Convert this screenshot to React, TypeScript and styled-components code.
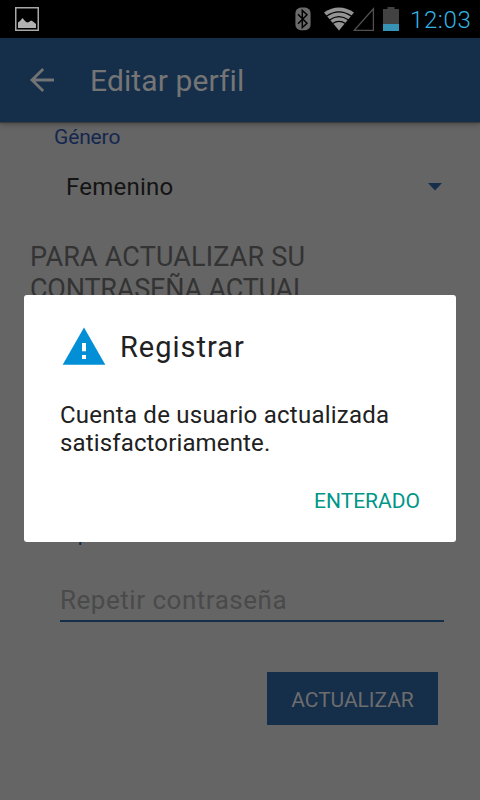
import React from 'react';
import styled, { createGlobalStyle } from 'styled-components';

const GlobalStyle = createGlobalStyle`
  * { box-sizing: border-box; }
  html, body { margin: 0; background: #656565; }
  body { font-family: Roboto, "Liberation Sans", sans-serif; }
  button, input { font-family: inherit; border: 0; margin: 0; border-radius: 0; }
`;

const Screen = styled.div`
  display: flex;
  flex-direction: column;
  position: relative;
  width: 480px;
  height: 800px;
  overflow: hidden;
  background: #656565;
`;

const StatusBar = styled.div`
  display: flex;
  justify-content: space-between;
  align-items: center;
  flex: none;
  height: 38px;
  padding: 0 6px 0 15px;
  background: #000;
`;

const StatusIcons = styled.div`
  display: flex;
  align-items: center;
`;

const Clock = styled.span`
  width: 64px;
  padding-top: 2px;
  font-size: 24px;
  font-weight: 300;
  line-height: 36px;
  letter-spacing: 0.6px;
  white-space: nowrap;
  color: #33b5e5;
`;

const Header = styled.header`
  display: flex;
  align-items: center;
  flex: none;
  height: 84px;
  padding: 0 30px;
  background: #152e4a;
  box-shadow: 0 1px 1px #3c3c3c, 0 2px 6px rgba(0, 0, 0, 0.3);
`;

const HeaderTitle = styled.h1`
  margin: 2px 0 0 35px;
  font-size: 30px;
  font-weight: 400;
  line-height: 36px;
  letter-spacing: 0.12px;
  color: #757575;
`;

const Form = styled.main`
  display: flex;
  flex-direction: column;
  flex: 1;
  padding: 3px 30px 0;
`;

const FieldLabel = styled.label`
  padding-left: 24px;
  font-size: 21px;
  line-height: 24px;
  letter-spacing: -0.14px;
  color: #14274f;
`;

const Select = styled.div`
  display: flex;
  align-items: center;
  justify-content: space-between;
  height: 28px;
  margin: 24px 0 40px;
  padding: 0 7px 0 36px;
  font-size: 24px;
  line-height: 28px;
  letter-spacing: 0.23px;
  color: #141414;
`;

const SectionTitle = styled.h2`
  height: 64px;
  margin: 0 0 217px;
  font-size: 27px;
  font-weight: 400;
  line-height: 32px;
  color: #333;
`;

const TitleLine = styled.span<{ $tracking: number }>`
  display: block;
  letter-spacing: ${({ $tracking }) => $tracking}px;
`;

const PasswordInput = styled.input`
  width: 384px;
  height: 38px;
  margin: 38px 0 50px 30px;
  padding: 0 0 5px;
  border-bottom: 2px solid #152e4a;
  outline: 0;
  background: transparent;
  font-size: 26px;
  line-height: 30px;
  letter-spacing: 0.52px;
  &::placeholder { color: #4a4a4a; opacity: 1; }
`;

const SubmitButton = styled.button`
  align-self: flex-end;
  width: 171px;
  height: 53px;
  margin-right: 12px;
  padding: 2px 0 0;
  background: #152e4a;
  font-size: 21px;
  line-height: 24px;
  letter-spacing: -0.06px;
  color: #6d6d6d;
`;

const DialogLayer = styled.div`
  position: absolute;
  inset: 37px 0 0;
  display: flex;
  align-items: center;
  justify-content: center;
`;

const Dialog = styled.section`
  display: flex;
  flex-direction: column;
  width: 432px;
  height: 247px;
  padding: 29px 36px 0 36px;
  border-radius: 3px;
  background: #fff;
`;

const DialogHeading = styled.div`
  display: flex;
  align-items: center;
  height: 46px;
`;

const DialogTitle = styled.h2`
  margin: 0 0 0 12px;
  font-size: 29px;
  font-weight: 400;
  line-height: 34px;
  letter-spacing: 0.99px;
  color: #212121;
`;

const DialogMessage = styled.p`
  margin: 31px 0 32px;
  font-size: 24px;
  line-height: 28px;
  white-space: nowrap;
  color: #212121;
`;

const DialogAction = styled.button`
  align-self: flex-end;
  padding: 0;
  background: transparent;
  font-size: 21px;
  line-height: 24px;
  color: #009688;
`;

const PictureIcon = () => (
  <svg width="24" height="24" viewBox="0 0 24 24">
    <rect x=".75" y=".75" width="22.5" height="22.5" fill="none" stroke="#a8a8a8" strokeWidth="1.5" />
    <path d="M3 21v-5.5l2-1.5 2.5-3 2.5 3 2 1.5 2-.5 2-1.5 2 1 3 2.5V21z" fill="#b2b2b2" />
  </svg>
);

const BluetoothIcon = () => (
  <svg width="16" height="24" viewBox="0 0 16 24">
    <rect x=".4" y=".6" width="15.2" height="22.6" rx="5.5" fill="#6b6b6b" />
    <path d="M3 7.2l9 9-4.7 4.3V3.5L12 7.8l-9 9" fill="none" stroke="#000" strokeWidth="1.5" />
  </svg>
);

const WifiIcon = () => (
  <svg width="30" height="24" viewBox="0 0 30 24">
    <path d="M15 23.5L0 5.6Q15-4.4 30 5.6z" fill="#949494" />
    <path d="M2.3 9.2Q15 .4 27.7 9.2M5.4 13Q15 6.2 24.6 13M8.6 16.6Q15 12 21.4 16.6" fill="none" stroke="#000" strokeWidth="1.2" />
  </svg>
);

const SignalIcon = () => (
  <svg width="22" height="24" viewBox="0 0 22 24">
    <path d="M1.3 23.3H20.4V1.8z" fill="none" stroke="#505050" strokeWidth="1.3" />
  </svg>
);

const BatteryIcon = () => (
  <svg width="16" height="24" viewBox="0 0 16 24">
    <path d="M0 2h4.5V0h7v2H16v22H0z" fill="#424242" />
    <path d="M0 17h16v7H0z" fill="#3693b6" />
  </svg>
);

const BatterySlot = styled.span`
  display: flex;
  margin: 0 11px 0 8px;
`;

const WifiSlot = styled.span`
  display: flex;
  margin: 0 -1px 0 13px;
`;

const BackIcon = () => (
  <svg width="25" height="24" viewBox="0 0 25 24">
    <path d="M24 12H2M13.2 1L2 12l11.2 11" fill="none" stroke="#737373" strokeWidth="2.8" />
  </svg>
);

const DropdownIcon = () => (
  <svg width="16" height="10" viewBox="0 0 16 10">
    <path d="M1 1h14L8 8.5z" fill="#152e4a" />
  </svg>
);

const WarningIcon = () => (
  <svg width="48" height="46" viewBox="0 0 48 46">
    <path d="M24 3.5L45.3 40.8H2.7z" fill="#038fd6" />
    <path d="M22 19h4v8.2h-4zm0 12h4v3.9h-4z" fill="#fff" />
  </svg>
);

export default function App() {
  return (
    <>
      <GlobalStyle />
      <Screen>
        <StatusBar>
          <PictureIcon />
          <StatusIcons>
            <BluetoothIcon />
            <WifiSlot><WifiIcon /></WifiSlot>
            <SignalIcon />
            <BatterySlot><BatteryIcon /></BatterySlot>
            <Clock>12:03</Clock>
          </StatusIcons>
        </StatusBar>
        <Header>
          <BackIcon />
          <HeaderTitle>Editar perfil</HeaderTitle>
        </Header>
        <Form>
          <FieldLabel>Género</FieldLabel>
          <Select>
            Femenino
            <DropdownIcon />
          </Select>
          <SectionTitle>
            <TitleLine $tracking={0.17}>PARA ACTUALIZAR SU</TitleLine>
            <TitleLine $tracking={-0.2}>CONTRASEÑA ACTUAL</TitleLine>
          </SectionTitle>
          <FieldLabel htmlFor="repeat">Repetir contraseña</FieldLabel>
          <PasswordInput id="repeat" type="password" placeholder="Repetir contraseña" />
          <SubmitButton>ACTUALIZAR</SubmitButton>
        </Form>
        <DialogLayer>
          <Dialog role="alertdialog">
            <DialogHeading>
              <WarningIcon />
              <DialogTitle>Registrar</DialogTitle>
            </DialogHeading>
            <DialogMessage>
              <TitleLine $tracking={0.24}>Cuenta de usuario actualizada</TitleLine>
              <TitleLine $tracking={0.14}>satisfactoriamente.</TitleLine>
            </DialogMessage>
            <DialogAction>ENTERADO</DialogAction>
          </Dialog>
        </DialogLayer>
      </Screen>
    </>
  );
}
